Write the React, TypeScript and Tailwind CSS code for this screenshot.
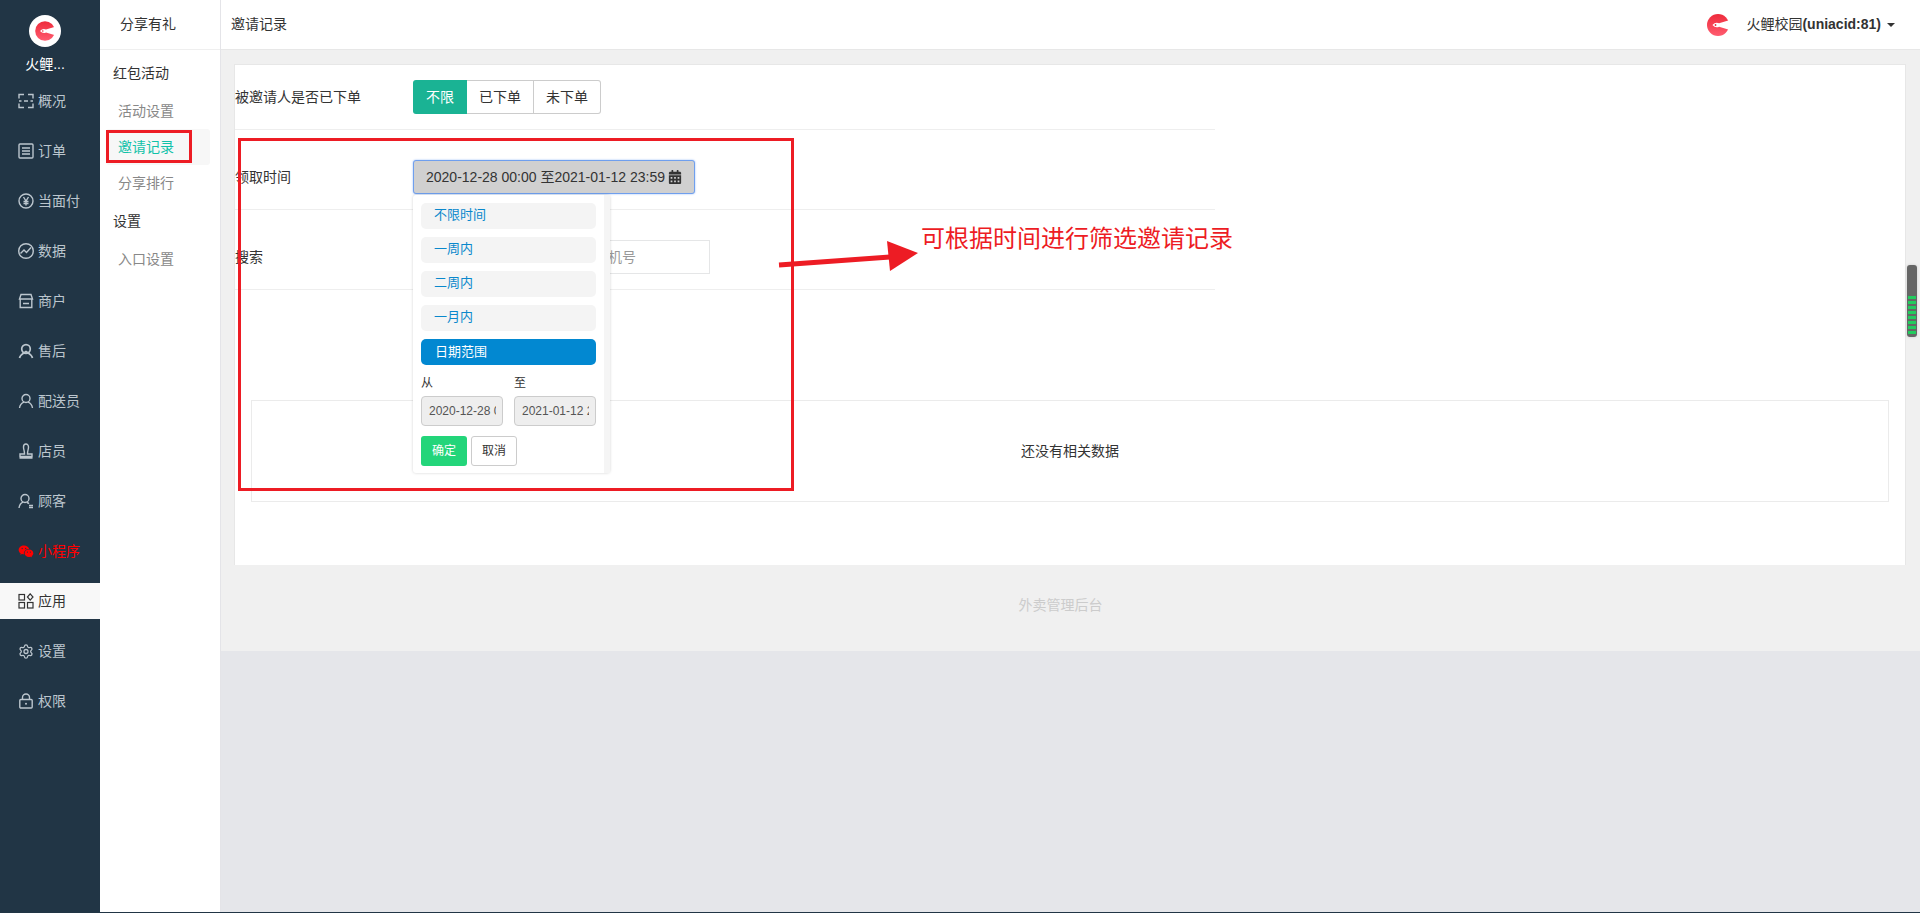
import React from "react";
import { Settings } from "lucide-react";
import { FaCalendarAlt } from "react-icons/fa";
import { RiWechatFill } from "react-icons/ri";

const font = "font-['Liberation_Sans','Noto_Sans_CJK_SC',sans-serif]";

function Logo({ size, disc }: { size: number; disc?: boolean }) {
  const id = disc ? "lg1" : "lg2";
  return (
    <svg width={size} height={size} viewBox={disc ? "0 0 32 32" : "6.2 6.2 19.600 19.600"}>
      <defs>
        <linearGradient id={id} x1="0" y1="0" x2="0" y2="1">
          <stop offset="0" stopColor="#ee2b3b" />
          <stop offset="1" stopColor="#ff5c70" />
        </linearGradient>
      </defs>
      {disc && <circle cx="16" cy="16" r="16" fill="#fff" />}
      <circle cx="16" cy="16" r="9.800" fill={`url(#${id})`} />
      <path d="M11 16q2.800-3 6-1.500L27 11.500v9L17 17.500q-3.200 1.500-6-1.500z" fill="#fff" />
      <circle cx="13.800" cy="16" r="0.800" fill="#ee2b3b" />
    </svg>
  );
}

const iconProps = {
  width: 16,
  height: 16,
  viewBox: "0 0 16 16",
  fill: "none",
  stroke: "currentColor",
  strokeWidth: 1.4,
};

const IconScan = () => (
  <svg {...iconProps}>
    <path d="M1 5.500V1.500h5M10 1.500h5v4M1 10.500v4h5M10 14.500h5v-4M1 8h2.500M6 8h4M12.500 8H15" />
  </svg>
);
const IconOrder = () => (
  <svg {...iconProps}>
    <rect x="1" y="1" width="14" height="14" rx="1" />
    <path d="M4 5h8M4 8h8M4 11h8" />
  </svg>
);
const IconYen = () => (
  <svg {...iconProps}>
    <circle cx="8" cy="8" r="7" />
    <path d="M5.500 4 8 8l2.500-4M8 8v4.500M5.500 8.500h5M5.500 10.500h5" />
  </svg>
);
const IconChart = () => (
  <svg {...iconProps}>
    <circle cx="8" cy="8" r="7.300" />
    <path d="M2.500 10.500 6 7l2.500 2.500L13 4.500" />
  </svg>
);
const IconStore = () => (
  <svg {...iconProps}>
    <path d="M3 1.500h10l1.500 4.500h-13zM2.200 6v8.500h11.600V6M5 10.500h6" />
  </svg>
);
const IconAfter = () => (
  <svg {...iconProps} strokeWidth={1.7}>
    <circle cx="8" cy="6" r="4.300" />
    <path d="M1.500 15c.8-3.500 3.500-4.500 6.500-6.500 3 2 5.700 3 6.500 6.500" />
  </svg>
);
const IconUser = () => (
  <svg {...iconProps}>
    <circle cx="8" cy="5.500" r="4" />
    <path d="M1.500 15c.5-3.500 2.500-5 4.500-5.800M14.500 15c-.5-3.500-2.500-5-4.500-5.800" />
  </svg>
);
const IconStamp = () => (
  <svg {...iconProps}>
    <path d="M5.500 4a2.500 3 0 1 1 5 0c0 2.500-1 3.500-1 7h4.500v2.500H2V11h4.500c0-3.500-1-4.500-1-7zM1.500 15h13" />
  </svg>
);
const IconCustomer = () => (
  <svg {...iconProps}>
    <circle cx="7" cy="5.500" r="4" />
    <path d="M1 15c.5-3.500 2-5 4-5.800M9 9.500c.8.300 1.500.7 2 1.200M11 12.500h4M11 14.500h4" />
  </svg>
);
const IconApps = () => (
  <svg {...iconProps} strokeWidth={1.2}>
    <rect x="1" y="1.500" width="5.500" height="5.500" />
    <rect x="1" y="9.500" width="5.500" height="5.500" />
    <rect x="9.500" y="9.500" width="5.500" height="5.500" />
    <path d="M12.200.8 15 4l-2.800 3.200L9.400 4z" />
  </svg>
);
const IconLock = () => (
  <svg {...iconProps}>
    <rect x="1.800" y="6.500" width="12.400" height="8.500" rx="1" />
    <path d="M4.500 6.500V4.500a3.500 3.500 0 0 1 7 0v2" />
    <circle cx="8" cy="10.700" r="1" fill="currentColor" stroke="none" />
  </svg>
);

type Item = { label: string; icon: React.ReactNode; cls?: string };
const items: Item[] = [
  { label: "概况", icon: <IconScan /> },
  { label: "订单", icon: <IconOrder /> },
  { label: "当面付", icon: <IconYen /> },
  { label: "数据", icon: <IconChart /> },
  { label: "商户", icon: <IconStore /> },
  { label: "售后", icon: <IconAfter /> },
  { label: "配送员", icon: <IconUser /> },
  { label: "店员", icon: <IconStamp /> },
  { label: "顾客", icon: <IconCustomer /> },
  { label: "小程序", icon: <RiWechatFill size={17} />, cls: "text-[#ff0000]" },
  { label: "应用", icon: <IconApps />, cls: "bg-[#f8f8f8] text-[#333333]" },
  { label: "设置", icon: <Settings size={17} strokeWidth={1.9} /> },
  { label: "权限", icon: <IconLock /> },
];

function MainNav() {
  return (
    <aside className="w-[100px] shrink-0 bg-[#213545] flex flex-col items-stretch">
      <div className="flex flex-col items-center pt-[15px] pr-[10px]">
        <Logo size={32} disc />
        <div className="mt-[7px] h-[20px] leading-[20px] text-[14px] text-white">火鲤...</div>
      </div>
      <nav className="mt-[9px] flex flex-col gap-[14px]">
        {items.map((it) => (
          <div
            key={it.label}
            className={`h-[36px] pl-[18px] flex items-center gap-[4px] text-[14px] ${it.cls ?? "text-[#bcc6ce]"}`}
          >
            <span className="w-[16px] h-[16px] flex items-center justify-center">{it.icon}</span>
            <span>{it.label}</span>
          </div>
        ))}
      </nav>
    </aside>
  );
}

function SubNav() {
  const Group = ({ t }: { t: string }) => (
    <div className="h-[36px] pl-[13px] flex items-center text-[14px] text-[#333333]">{t}</div>
  );
  const Sub = ({ t, active }: { t: string; active?: boolean }) => (
    <div
      className={`h-[36px] ml-[6px] mr-[10px] pl-[12px] flex items-center text-[14px] rounded-[3px] ${
        active ? "bg-[#f7f7f7] text-[#12c2a9]" : "text-[#888888]"
      }`}
    >
      {t}
    </div>
  );
  return (
    <aside className="w-[121px] shrink-0 bg-white border-r border-[#e4e4e8] flex flex-col">
      <div className="h-[50px] shrink-0 border-b border-[#efefef] pl-[20px] flex items-center text-[14px] text-[#333333]">
        分享有礼
      </div>
      <div className="pt-[5px] flex flex-col">
        <Group t="红包活动" />
        <div className="h-[2px]" />
        <Sub t="活动设置" />
        <Sub t="邀请记录" active />
        <Sub t="分享排行" />
        <div className="h-[2px]" />
        <Group t="设置" />
        <div className="h-[2px]" />
        <Sub t="入口设置" />
      </div>
    </aside>
  );
}

function TopBar() {
  return (
    <header className="h-[50px] shrink-0 bg-white border-b border-[#e7e7e7] flex items-center justify-between pl-[10px] pr-[25px] text-[14px] text-[#333333]">
      <div>邀请记录</div>
      <div className="flex items-center">
        <Logo size={22} />
        <span className="ml-[17px]">
          火鲤校园<span className="font-bold">(uniacid:81)</span>
        </span>
        <span className="ml-[6px] w-0 h-0 border-x-[4px] border-x-transparent border-t-[4px] border-t-[#333333]" />
      </div>
    </header>
  );
}

function DateMenu() {
  const opts = ["不限时间", "一周内", "二周内", "一月内"];
  return (
    <div className="absolute z-10 left-0 top-[35px] w-[197px] h-[278px] bg-white rounded-[3px] shadow-[0_0_3px_rgba(0,0,0,0.18)] flex">
      <div className="w-[191px] px-[8px] pt-[8px] flex flex-col">
        {opts.map((o) => (
          <div
            key={o}
            className="h-[26px] mb-[8px] pb-[2px] rounded-[5px] bg-[#f4f4f4] pl-[13px] flex items-center text-[13px] text-[#0a88cc]"
          >
            {o}
          </div>
        ))}
        <div className="h-[26px] pb-[1px] rounded-[5px] bg-[#0288d1] pl-[14px] flex items-center text-[13px] text-white">
          日期范围
        </div>
        <div className="mt-[10px] flex gap-[11px] text-[12px] text-[#333333]">
          <div className="w-[82px]">
            <div className="h-[16px] leading-[16px]">从</div>
            <div className="mt-[5px] h-[30px] pl-[7px] pr-[6px] rounded-[4px] border border-[#cccccc] bg-[#eeeeee] text-[#555555] flex items-center overflow-hidden whitespace-nowrap">
              <span className="overflow-hidden">2020-12-28 00:00</span>
            </div>
          </div>
          <div className="w-[82px]">
            <div className="h-[16px] leading-[16px]">至</div>
            <div className="mt-[5px] h-[30px] pl-[7px] pr-[6px] rounded-[4px] border border-[#cccccc] bg-[#eeeeee] text-[#555555] flex items-center overflow-hidden whitespace-nowrap">
              <span className="overflow-hidden">2021-01-12 23:59</span>
            </div>
          </div>
        </div>
        <div className="mt-[10px] flex gap-[4px] text-[12px]">
          <div className="w-[46px] h-[30px] rounded-[3px] bg-[#23d57a] text-white flex items-center justify-center">确定</div>
          <div className="w-[46px] h-[30px] rounded-[3px] border border-[#cccccc] bg-white text-[#333333] flex items-center justify-center">取消</div>
        </div>
      </div>
      <div className="w-[6px] bg-[#f5f5f5]" />
    </div>
  );
}

function Row({ label, children, pt }: { label: string; children: React.ReactNode; pt: string }) {
  return (
    <div className={`${pt} pb-[15px] border-b border-[#eeeeee] flex items-center`}>
      <div className="w-[178px] text-[14px] text-[#333333]">{label}</div>
      {children}
    </div>
  );
}

function Card() {
  return (
    <section className="ml-[13px] mr-[14px] mt-[14px] h-[501px] bg-white border-t border-l border-r border-[#e7e7e7]">
      <div className="w-[980px]">
        <Row label="被邀请人是否已下单" pt="pt-[15px]">
          <div className="flex h-[34px] text-[14px]">
            <div className="w-[54px] rounded-l-[3px] bg-[#1ab394] text-white flex items-center justify-center">不限</div>
            <div className="w-[67px] border-y border-r border-[#cccccc] text-[#333333] flex items-center justify-center">已下单</div>
            <div className="w-[67px] border-y border-r border-[#cccccc] rounded-r-[3px] text-[#333333] flex items-center justify-center">未下单</div>
          </div>
        </Row>
        <Row label="领取时间" pt="pt-[30px]">
          <div className="relative">
            <div className="w-[282px] h-[34px] rounded-[3px] bg-[#d0d0d0] border border-[#6f9fee] shadow-[0_0_2px_#8fb6f5] pl-[12px] flex items-center gap-[3px] text-[14px] text-[#333333] whitespace-nowrap">
              <span>2020-12-28 00:00 至2021-01-12 23:59</span>
              <FaCalendarAlt size={14} />
            </div>
            <DateMenu />
          </div>
        </Row>
        <Row label="搜索" pt="pt-[30px]">
          <div className="w-[297px] h-[34px] border border-[#e5e6e7] pl-[12px] flex items-center text-[14px] text-[#999999] whitespace-nowrap">
            请输入被邀请人的昵称或者手机号
          </div>
        </Row>
      </div>
      <div className="mt-[110px] ml-[16px] mr-[16px] h-[102px] border border-[#ebebeb] flex items-center justify-center text-[14px] text-[#333333]">
        还没有相关数据
      </div>
    </section>
  );
}

function Annotations() {
  return (
    <>
      <div className="absolute left-[106px] top-[130px] w-[86px] h-[33px] border-[3px] border-[#ed1c24]" />
      <div className="absolute left-[238px] top-[138px] w-[556px] h-[353px] border-[3px] border-[#ed1c24]" />
      <svg className="absolute left-[770px] top-[230px]" width="160" height="50" viewBox="770 230 160 50">
        <path d="M779 265 890 257" stroke="#ed1c24" strokeWidth="5" />
        <path d="M887 241 918 253 890 271z" fill="#ed1c24" />
      </svg>
      <div className="absolute left-[921px] top-[223px] text-[24px] leading-[32px] text-[#ed1c24] whitespace-nowrap">
        可根据时间进行筛选邀请记录
      </div>
      <div className="absolute left-[1907px] top-[265px] w-[10px] h-[72px] rounded-[3px] bg-[#666666] flex flex-col justify-end gap-[2px] px-[1px] pb-[3px] shadow-[0_0_3px_rgba(0,0,0,0.15)]">
        {[0, 1, 2, 3, 4, 5, 6, 7].map((i) => (
          <div key={i} className="h-[3px] bg-[#22cc5e]" />
        ))}
      </div>
    </>
  );
}

export default function App() {
  return (
    <div className={`relative w-[1920px] h-[913px] overflow-hidden bg-[#213545] ${font}`}>
      <div className="h-[912px] flex">
        <MainNav />
        <SubNav />
        <main className="flex-1 min-w-0 bg-[#e5e6ea] flex flex-col">
          <TopBar />
          <div className="h-[601px] bg-[#f0f0f0]">
            <Card />
            <div className="pr-[20px] mt-[29px] h-[22px] leading-[22px] text-center text-[14px] text-[#cccccc]">外卖管理后台</div>
          </div>
        </main>
      </div>
      <Annotations />
    </div>
  );
}
